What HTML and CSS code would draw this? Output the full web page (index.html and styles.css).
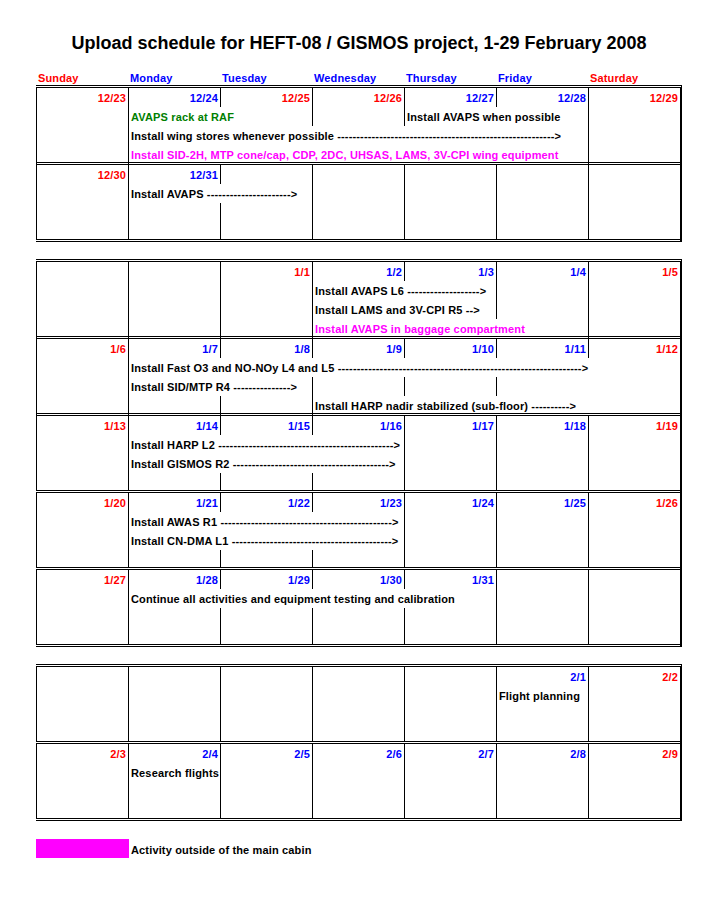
FILE: index.html
```html
<!DOCTYPE html>
<html>
<head>
<meta charset="utf-8">
<title>Upload schedule</title>
<link rel="stylesheet" href="styles.css">
</head>
<body>
<div class="page">
  <h1 class="title">Upload schedule for HEFT-08 / GISMOS project, 1-29 February 2008</h1>
  <div class="days">
    <span class="rd">Sunday</span><span class="bl">Monday</span><span class="bl">Tuesday</span><span class="bl">Wednesday</span><span class="bl">Thursday</span><span class="bl">Friday</span><span class="rd">Saturday</span>
  </div>

  <div class="block">
    <div class="week">
      <div class="row"><span class="c d rd">12/23</span><span class="c d bl">12/24</span><span class="c d rd">12/25</span><span class="c d rd">12/26</span><span class="c d bl">12/27</span><span class="c d bl">12/28</span><span class="c d rd">12/29</span></div>
      <div class="row"><span class="c"></span><span class="c t gr">AVAPS rack at RAF</span><span class="c n"></span><span class="c"></span><span class="c t">Install AVAPS when possible</span><span class="c n"></span><span class="c"></span></div>
      <div class="row"><span class="c"></span><span class="c t">Install wing stores whenever possible ---------------------------------------------------------&gt;</span><span class="c n"></span><span class="c n"></span><span class="c n"></span><span class="c n"></span><span class="c"></span></div>
      <div class="row last"><span class="c"></span><span class="c t mg">Install SID-2H, MTP cone/cap, CDP, 2DC, UHSAS, LAMS, 3V-CPI wing equipment</span><span class="c n"></span><span class="c n"></span><span class="c n"></span><span class="c n"></span><span class="c"></span></div>
    </div>
    <div class="week">
      <div class="row"><span class="c d rd">12/30</span><span class="c d bl">12/31</span><span class="c"></span><span class="c"></span><span class="c"></span><span class="c"></span><span class="c"></span></div>
      <div class="row"><span class="c"></span><span class="c t">Install AVAPS ----------------------&gt;</span><span class="c n"></span><span class="c"></span><span class="c"></span><span class="c"></span><span class="c"></span></div>
      <div class="row"><span class="c"></span><span class="c"></span><span class="c"></span><span class="c"></span><span class="c"></span><span class="c"></span><span class="c"></span></div>
      <div class="row last"><span class="c"></span><span class="c"></span><span class="c"></span><span class="c"></span><span class="c"></span><span class="c"></span><span class="c"></span></div>
    </div>
  </div>

  <div class="block">
    <div class="week">
      <div class="row"><span class="c"></span><span class="c"></span><span class="c d rd">1/1</span><span class="c d bl">1/2</span><span class="c d bl">1/3</span><span class="c d bl">1/4</span><span class="c d rd">1/5</span></div>
      <div class="row"><span class="c"></span><span class="c"></span><span class="c"></span><span class="c t">Install AVAPS L6 -------------------&gt;</span><span class="c n"></span><span class="c"></span><span class="c"></span></div>
      <div class="row"><span class="c"></span><span class="c"></span><span class="c"></span><span class="c t">Install LAMS and 3V-CPI R5 --&gt;</span><span class="c n"></span><span class="c"></span><span class="c"></span></div>
      <div class="row last"><span class="c"></span><span class="c"></span><span class="c"></span><span class="c t mg">Install AVAPS in baggage compartment</span><span class="c n"></span><span class="c n"></span><span class="c"></span></div>
    </div>
    <div class="week">
      <div class="row"><span class="c d rd">1/6</span><span class="c d bl">1/7</span><span class="c d bl">1/8</span><span class="c d bl">1/9</span><span class="c d bl">1/10</span><span class="c d bl">1/11</span><span class="c d rd">1/12</span></div>
      <div class="row"><span class="c"></span><span class="c t">Install Fast O3 and NO-NOy L4 and L5 ----------------------------------------------------------------&gt;</span><span class="c n"></span><span class="c n"></span><span class="c n"></span><span class="c n"></span><span class="c n"></span></div>
      <div class="row"><span class="c"></span><span class="c t">Install SID/MTP R4 ---------------&gt;</span><span class="c n"></span><span class="c"></span><span class="c"></span><span class="c"></span><span class="c n"></span></div>
      <div class="row last"><span class="c"></span><span class="c"></span><span class="c"></span><span class="c t">Install HARP nadir stabilized (sub-floor) ----------&gt;</span><span class="c n"></span><span class="c n"></span><span class="c n"></span></div>
    </div>
    <div class="week">
      <div class="row"><span class="c d rd">1/13</span><span class="c d bl">1/14</span><span class="c d bl">1/15</span><span class="c d bl">1/16</span><span class="c d bl">1/17</span><span class="c d bl">1/18</span><span class="c d rd">1/19</span></div>
      <div class="row"><span class="c"></span><span class="c t">Install HARP L2 ----------------------------------------------&gt;</span><span class="c n"></span><span class="c n"></span><span class="c"></span><span class="c"></span><span class="c"></span></div>
      <div class="row"><span class="c"></span><span class="c t">Install GISMOS R2 -----------------------------------------&gt;</span><span class="c n"></span><span class="c n"></span><span class="c"></span><span class="c"></span><span class="c"></span></div>
      <div class="row last"><span class="c"></span><span class="c"></span><span class="c"></span><span class="c"></span><span class="c"></span><span class="c"></span><span class="c"></span></div>
    </div>
    <div class="week">
      <div class="row"><span class="c d rd">1/20</span><span class="c d bl">1/21</span><span class="c d bl">1/22</span><span class="c d bl">1/23</span><span class="c d bl">1/24</span><span class="c d bl">1/25</span><span class="c d rd">1/26</span></div>
      <div class="row"><span class="c"></span><span class="c t">Install AWAS R1 ---------------------------------------------&gt;</span><span class="c n"></span><span class="c n"></span><span class="c"></span><span class="c"></span><span class="c"></span></div>
      <div class="row"><span class="c"></span><span class="c t">Install CN-DMA L1 ------------------------------------------&gt;</span><span class="c n"></span><span class="c n"></span><span class="c"></span><span class="c"></span><span class="c"></span></div>
      <div class="row last"><span class="c"></span><span class="c"></span><span class="c"></span><span class="c"></span><span class="c"></span><span class="c"></span><span class="c"></span></div>
    </div>
    <div class="week">
      <div class="row"><span class="c d rd">1/27</span><span class="c d bl">1/28</span><span class="c d bl">1/29</span><span class="c d bl">1/30</span><span class="c d bl">1/31</span><span class="c"></span><span class="c"></span></div>
      <div class="row"><span class="c"></span><span class="c t">Continue all activities and equipment testing and calibration</span><span class="c n"></span><span class="c n"></span><span class="c n"></span><span class="c"></span><span class="c"></span></div>
      <div class="row"><span class="c"></span><span class="c"></span><span class="c"></span><span class="c"></span><span class="c"></span><span class="c"></span><span class="c"></span></div>
      <div class="row last"><span class="c"></span><span class="c"></span><span class="c"></span><span class="c"></span><span class="c"></span><span class="c"></span><span class="c"></span></div>
    </div>
  </div>

  <div class="block">
    <div class="week">
      <div class="row"><span class="c"></span><span class="c"></span><span class="c"></span><span class="c"></span><span class="c"></span><span class="c d bl">2/1</span><span class="c d rd">2/2</span></div>
      <div class="row"><span class="c"></span><span class="c"></span><span class="c"></span><span class="c"></span><span class="c"></span><span class="c t">Flight planning</span><span class="c"></span></div>
      <div class="row"><span class="c"></span><span class="c"></span><span class="c"></span><span class="c"></span><span class="c"></span><span class="c"></span><span class="c"></span></div>
      <div class="row last"><span class="c"></span><span class="c"></span><span class="c"></span><span class="c"></span><span class="c"></span><span class="c"></span><span class="c"></span></div>
    </div>
    <div class="week">
      <div class="row"><span class="c d rd">2/3</span><span class="c d bl">2/4</span><span class="c d bl">2/5</span><span class="c d bl">2/6</span><span class="c d bl">2/7</span><span class="c d bl">2/8</span><span class="c d rd">2/9</span></div>
      <div class="row"><span class="c"></span><span class="c t">Research flights</span><span class="c"></span><span class="c"></span><span class="c"></span><span class="c"></span><span class="c"></span></div>
      <div class="row"><span class="c"></span><span class="c"></span><span class="c"></span><span class="c"></span><span class="c"></span><span class="c"></span><span class="c"></span></div>
      <div class="row last"><span class="c"></span><span class="c"></span><span class="c"></span><span class="c"></span><span class="c"></span><span class="c"></span><span class="c"></span></div>
    </div>
  </div>

  <div class="legend">
    <span class="swatch"></span><span class="legend-text">Activity outside of the main cabin</span>
  </div>
</div>
</body>
</html>
```

FILE: styles.css
```css
html, body {
  margin: 0;
  padding: 0;
  background: #ffffff;
}

body {
  font-family: "Liberation Sans", Arial, sans-serif;
  font-weight: bold;
  font-size: 11px;
  color: #000000;
  letter-spacing: 0.15px;
}

.page {
  padding: 32px 0 0 36px;
  width: 646px;
}

.title {
  margin: 0;
  width: 646px;
  font-size: 18px;
  line-height: 22px;
  font-weight: bold;
  text-align: center;
  letter-spacing: 0;
}

.days {
  display: grid;
  grid-template-columns: repeat(7, 92px);
  margin-top: 18px;
  height: 13px;
  line-height: 13px;
}

.days span {
  padding-left: 2px;
  white-space: nowrap;
}

.rd { color: #ff0000; }
.bl { color: #0000ff; }
.gr { color: #008000; }
.mg { color: #ff00ff; }

.block {
  width: 644px;
  border-top: 3px double #000000;
  border-right: 2px solid #000000;
}

.block + .block {
  margin-top: 17px;
}

.week {
  border-bottom: 3px double #000000;
}

.row {
  display: grid;
  grid-template-columns: repeat(7, 92px);
  height: 19px;
}

.row.last {
  height: 17px;
}

.c {
  box-sizing: border-box;
  border-left: 1px solid #000000;
  padding-top: 2px;
  line-height: 17px;
  white-space: nowrap;
  min-width: 0;
  overflow: visible;
}

.c.n {
  border-left-color: transparent;
}

.d {
  text-align: right;
  padding-right: 2px;
}

.t {
  padding-left: 2px;
}

.legend {
  display: flex;
  margin-top: 18px;
}

.swatch {
  display: block;
  width: 93px;
  height: 19px;
  background: #ff00ff;
}

.legend-text {
  padding: 3px 0 0 2px;
  line-height: 16px;
  white-space: nowrap;
}
```
